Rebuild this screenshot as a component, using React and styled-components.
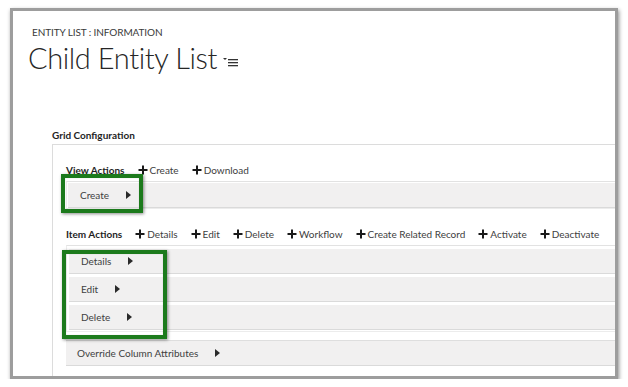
import React from "react";
import styled, { createGlobalStyle } from "styled-components";

const Global = createGlobalStyle`
  html, body { margin: 0; padding: 0; background: #ffffff; }
  body { font-family: "Lato", "Open Sans", sans-serif; }
`;

const Frame = styled.div`
  position: relative;
  margin: 8px 0 0 10px;
  width: 602px;
  height: 365px;
  border: 3px solid #9d9d9d;
  box-shadow: 1px 2px 4px rgba(0, 0, 0, 0.45);
  background: #fff;
  overflow: hidden;
  display: flex;
  flex-direction: column;
`;

const Header = styled.div`
  padding: 15px 0 0 19px;
  font-size: 10px;
  line-height: 13px;
  color: #3a3a3a;
  letter-spacing: -0.1px;
`;

const TitleRow = styled.div`
  display: flex;
  align-items: center;
  gap: 6px;
  padding: 0 0 0 15px;
  height: 38px;
`;

const Title = styled.h1`
  margin: 0;
  font-family: "Lato", "Open Sans", sans-serif;
  font-weight: 300;
  font-size: 29px;
  line-height: 38px;
  color: #262626;
  letter-spacing: -0.4px;
`;

const Section = styled.div`
  margin-top: 52px;
  padding-left: 39px;
  display: flex;
  flex-direction: column;
  flex: 1;
`;

const SectionLabel = styled.div`
  font-size: 10px;
  font-weight: 700;
  line-height: 13px;
  color: #1f1f1f;
  height: 13px;
  margin-bottom: 2px;
`;

const Box = styled.div`
  flex: 1;
  border-top: 1px solid #dcdcdc;
  border-left: 1px solid #dcdcdc;
  padding: 18px 0 0 13px;
  display: flex;
  flex-direction: column;
`;

const Toolbar = styled.div`
  display: flex;
  align-items: center;
  height: 14px;
  font-size: 10px;
  line-height: 14px;
  margin-bottom: ${(p) => p.$mb}px;
`;

const ToolLabel = styled.span`
  font-weight: 700;
  color: #1f1f1f;
  margin-right: 13px;
`;

const ToolItem = styled.span`
  display: inline-flex;
  align-items: center;
  gap: 2px;
  color: #404040;
  margin-right: 13px;
`;

const List = styled.div`
  border-top: 1px solid #e2e2e2;
  border-bottom: 1px solid #ececec;
  border-left: 1px solid #ececec;
  padding: ${(p) => p.$pad};
  display: flex;
  flex-direction: column;
  gap: 3px;
  margin-bottom: ${(p) => p.$mb}px;
`;

const Row = styled.div`
  display: flex;
  align-items: center;
  gap: 17px;
  height: 24px;
  background: #f1f0f0;
  border-bottom: 1px solid #dadada;
  border-top: ${(p) => (p.$top ? "1px solid #dedede" : "none")};
  padding-left: ${(p) => p.$pl}px;
  font-size: 10px;
  color: #404040;
`;

const Highlight = styled.div`
  position: absolute;
  left: ${(p) => p.$x}px;
  top: ${(p) => p.$y}px;
  width: ${(p) => p.$w}px;
  height: ${(p) => p.$h}px;
  box-sizing: border-box;
  border: 4px solid #1c7a1c;
  box-shadow: 1px 1px 3px rgba(0, 0, 0, 0.45), inset 0 0 1px rgba(0, 0, 0, 0.3);
  pointer-events: none;
`;

const Plus = () => (
  <svg width="10" height="10" viewBox="0 0 10 10">
    <path d="M4 0.5h2v3.5h3.5v2H6v3.5H4V6H0.5V4H4z" fill="#1a1a1a" />
  </svg>
);

const Arrow = () => (
  <svg width="5" height="8" viewBox="0 0 5 8">
    <path d="M0 0L5 4L0 8z" fill="#2a2a2a" />
  </svg>
);

const ViewIcon = () => (
  <svg width="17" height="10" viewBox="0 0 17 10" style={{ marginTop: 8 }}>
    <path d="M0 1h4L2 3z" fill="#333" />
    <rect x="5" y="2" width="10" height="1.3" fill="#333" />
    <rect x="5" y="5" width="10" height="1.3" fill="#333" />
    <rect x="5" y="8" width="10" height="1.3" fill="#333" />
  </svg>
);

const Action = ({ children }) => (
  <ToolItem>
    <Plus />
    {children}
  </ToolItem>
);

const ListRow = ({ label, pl = 12, top }) => (
  <Row $pl={pl} $top={top}>
    <span>{label}</span>
    <Arrow />
  </Row>
);

export default function App() {
  return (
    <>
      <Global />
      <Frame>
        <Header>ENTITY LIST : INFORMATION</Header>
        <TitleRow>
          <Title>Child Entity List</Title>
          <ViewIcon />
        </TitleRow>
        <Section>
          <SectionLabel>Grid Configuration</SectionLabel>
          <Box>
            <Toolbar $mb={4}>
              <ToolLabel>View Actions</ToolLabel>
              <Action>Create</Action>
              <Action>Download</Action>
            </Toolbar>
            <List $pad="1px 0 0 1px" $mb={18}>
              <ListRow label="Create" pl={12} />
            </List>
            <Toolbar $mb={4}>
              <ToolLabel>Item Actions</ToolLabel>
              <Action>Details</Action>
              <Action>Edit</Action>
              <Action>Delete</Action>
              <Action>Workflow</Action>
              <Action>Create Related Record</Action>
              <Action>Activate</Action>
              <Action>Deactivate</Action>
            </Toolbar>
            <List $pad="3px 0 1px 2px" $mb={8}>
              <ListRow label="Details" />
              <ListRow label="Edit" />
              <ListRow label="Delete" />
            </List>
            <Row $pl={11} $top>
              <span>Override Column Attributes</span>
              <Arrow />
            </Row>
          </Box>
        </Section>
        <Highlight $x={48} $y={163} $w={82} $h={39} />
        <Highlight $x={49} $y={239} $w={105} $h={89} />
      </Frame>
    </>
  );
}
